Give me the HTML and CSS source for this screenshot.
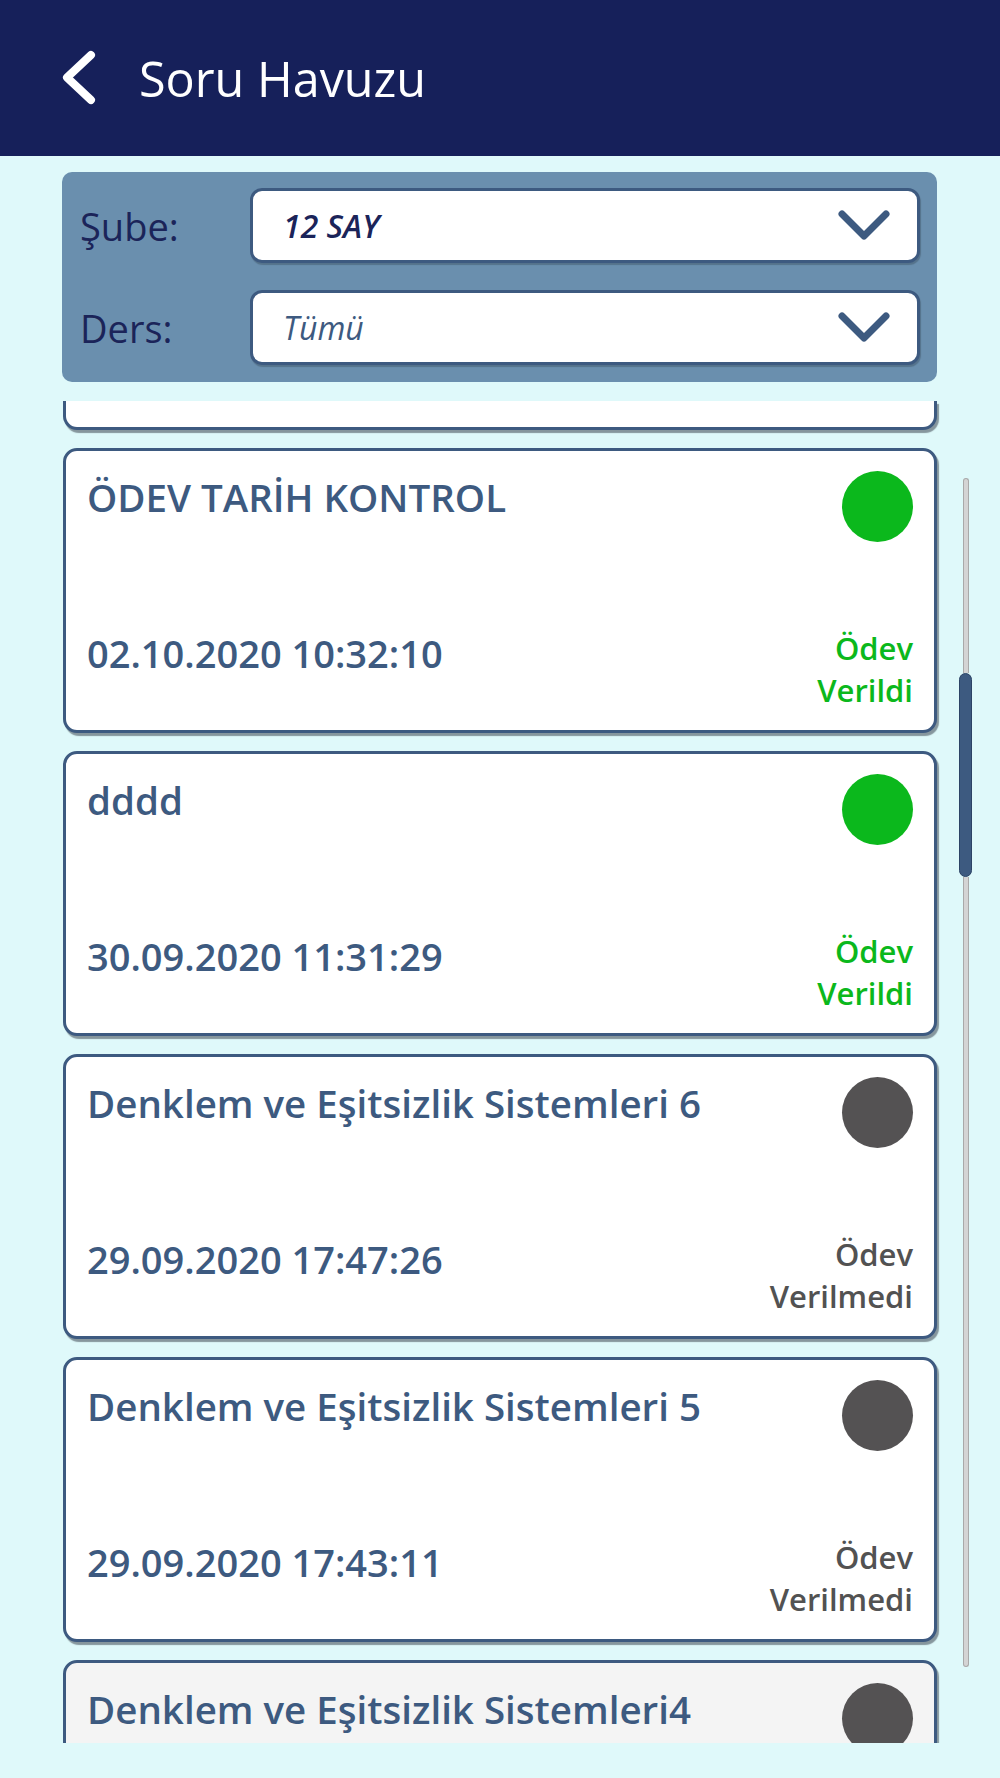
FILE: index.html
```html
<!DOCTYPE html>
<html lang="tr">

<head>
    <meta charset="UTF-8">
    <meta name="viewport" content="width=device-width, initial-scale=1.0">
    <title>Soru Havuzu</title>
    <link rel="stylesheet" href="styles.css">
</head>

<body>
    <header class="topbar">
        <span class="back">
            <svg width="40" height="58" viewBox="0 0 40 58">
                <polyline points="31,6 7,28.5 31,51" fill="none" stroke="#fff" stroke-width="8" stroke-linecap="round" stroke-linejoin="round" />
            </svg>
        </span>
        <h1>Soru Havuzu</h1>
    </header>

    <main class="content">
        <section class="filters">
            <label class="filter-label">Şube:</label>
            <div class="select">
                <span class="select-value">12 SAY</span>
                <svg width="52" height="32" viewBox="0 0 52 32">
                    <polyline points="4,4 26,26 48,4" fill="none" stroke="#3d5a80" stroke-width="7" stroke-linecap="round" stroke-linejoin="round" />
                </svg>
            </div>
            <label class="filter-label">Ders:</label>
            <div class="select">
                <span class="select-value placeholder">Tümü</span>
                <svg width="52" height="32" viewBox="0 0 52 32">
                    <polyline points="4,4 26,26 48,4" fill="none" stroke="#3d5a80" stroke-width="7" stroke-linecap="round" stroke-linejoin="round" />
                </svg>
            </div>
        </section>

        <div class="list-wrap">
            <div class="list">
                <div class="card cut"></div>

                <div class="card">
                    <div class="card-top">
                        <div class="card-title">ÖDEV TARİH KONTROL</div>
                        <span class="dot given"></span>
                    </div>
                    <div class="card-bottom">
                        <div class="card-date">02.10.2020 10:32:10</div>
                        <div class="status given">Ödev<br>Verildi</div>
                    </div>
                </div>

                <div class="card">
                    <div class="card-top">
                        <div class="card-title">dddd</div>
                        <span class="dot given"></span>
                    </div>
                    <div class="card-bottom">
                        <div class="card-date">30.09.2020 11:31:29</div>
                        <div class="status given">Ödev<br>Verildi</div>
                    </div>
                </div>

                <div class="card">
                    <div class="card-top">
                        <div class="card-title">Denklem ve Eşitsizlik Sistemleri 6</div>
                        <span class="dot"></span>
                    </div>
                    <div class="card-bottom">
                        <div class="card-date">29.09.2020 17:47:26</div>
                        <div class="status">Ödev<br>Verilmedi</div>
                    </div>
                </div>

                <div class="card">
                    <div class="card-top">
                        <div class="card-title">Denklem ve Eşitsizlik Sistemleri 5</div>
                        <span class="dot"></span>
                    </div>
                    <div class="card-bottom">
                        <div class="card-date">29.09.2020 17:43:11</div>
                        <div class="status">Ödev<br>Verilmedi</div>
                    </div>
                </div>

                <div class="card selected">
                    <div class="card-top">
                        <div class="card-title">Denklem ve Eşitsizlik Sistemleri4</div>
                        <span class="dot"></span>
                    </div>
                </div>
            </div>

            <div class="scrollbar">
                <div class="track track-top"></div>
                <div class="thumb"></div>
                <div class="track track-bottom"></div>
            </div>
        </div>
    </main>
</body>

</html>
```

FILE: styles.css
```css
* {
    box-sizing: border-box;
}

body {
    margin: 0;
    background: #dff9fa;
    font-family: "Open Sans", "Noto Sans", sans-serif;
}

.topbar {
    height: 156px;
    background: #16205a;
    display: flex;
    align-items: center;
    padding-left: 60px;
}

.back {
    display: flex;
    width: 40px;
    height: 58px;
    margin-right: 39px;
}

.topbar h1 {
    margin: 0;
    font-size: 48.5px;
    font-weight: 500;
    color: #fff;
}

.filters {
    width: 875px;
    height: 210px;
    margin: 16px 0 0 62px;
    padding: 16px 17px 17px 18px;
    background: #6a8fae;
    border-radius: 10px;
    display: grid;
    grid-template-columns: 170px 1fr;
    grid-template-rows: 75px 75px;
    row-gap: 27px;
    align-items: center;
}

.filter-label {
    font-size: 38px;
    font-weight: 500;
    color: #1b2459;
}

.select {
    height: 75px;
    background: #fff;
    border: 3px solid #3d5a80;
    border-radius: 12px;
    box-shadow: 1px 2px 1px rgba(0, 0, 0, 0.2);
    display: flex;
    align-items: center;
    justify-content: space-between;
    padding: 0 27px 0 30px;
}

.select-value {
    font-size: 32px;
    font-style: italic;
    font-weight: 600;
    color: #1b2459;
}

.select-value.placeholder {
    font-weight: 400;
    color: #3d5a80;
}

.list-wrap {
    display: flex;
    height: 1342px;
    margin: 19px 0 0 62px;
    overflow: hidden;
}

.list {
    width: 875px;
    padding-left: 1px;
    display: flex;
    flex-direction: column;
    gap: 18px;
}

.card {
    flex-shrink: 0;
    height: 285px;
    background: #fff;
    border: 3px solid #3d5a80;
    border-radius: 14px;
    box-shadow: 2px 3px 1px rgba(60, 70, 80, 0.55);
    padding: 20px 21px 19px 21px;
    display: flex;
    flex-direction: column;
    justify-content: space-between;
}

.card.cut {
    height: 29px;
    padding: 0;
    border-top: 0;
    border-radius: 0 0 14px 14px;
}

.card.selected {
    background: #f4f4f4;
}

.card-top,
.card-bottom {
    display: flex;
    justify-content: space-between;
    align-items: flex-start;
}

.card-title,
.card-date {
    font-size: 38px;
    line-height: 52px;
    font-weight: 600;
    color: #3d5a80;
}

.card-title {
    font-size: 38.5px;
}

.dot {
    width: 71px;
    height: 71px;
    border-radius: 50%;
    background: #545253;
    flex-shrink: 0;
}

.dot.given {
    background: #0bb81c;
}

.status {
    font-size: 31px;
    line-height: 42px;
    font-weight: 600;
    text-align: right;
    color: #525252;
}

.status.given {
    color: #0bb81c;
}

.scrollbar {
    width: 13px;
    margin-left: 22px;
    padding-top: 77px;
    display: flex;
    flex-direction: column;
    align-items: center;
}

.track {
    width: 6px;
    background: #d4d4d4;
    border: 1px solid #a9a9a9;
}

.track-top {
    height: 195px;
    border-bottom: 0;
    border-radius: 3px 3px 0 0;
}

.track-bottom {
    height: 790px;
    border-top: 0;
    border-radius: 0 0 3px 3px;
}

.thumb {
    width: 13px;
    height: 204px;
    background: #3d5a80;
    border: 1px solid #2c4365;
    border-radius: 7px;
}
```
